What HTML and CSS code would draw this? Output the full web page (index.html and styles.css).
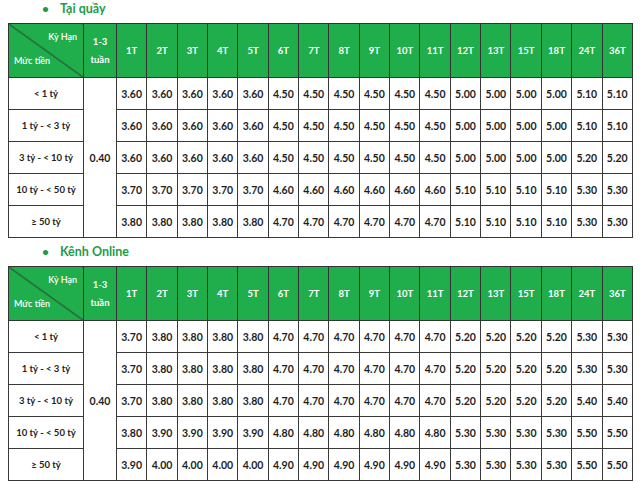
FILE: index.html
```html
<!DOCTYPE html>
<html lang="vi">
<head>
<meta charset="utf-8">
<link rel="stylesheet" href="styles.css">
</head>
<body>
<div class="page">
  <div class="title title-first"><span class="dot">•</span>Tại quầy</div>
  <table class="rates">
    <colgroup><col class="c-label"><col class="c-week"><col span="17"></colgroup>
    <thead>
      <tr>
        <th class="diag"><span class="k">Kỳ Hạn</span><span class="m">Mức tiền</span></th>
        <th>1-3<br>tuần</th>
        <th>1T</th><th>2T</th><th>3T</th><th>4T</th><th>5T</th><th>6T</th><th>7T</th><th>8T</th><th>9T</th><th>10T</th><th>11T</th><th>12T</th><th>13T</th><th>15T</th><th>18T</th><th>24T</th><th>36T</th>
      </tr>
    </thead>
    <tbody>
      <tr><td class="lbl">&lt; 1 tỷ</td><td class="wk" rowspan="5">0.40</td><td>3.60</td><td>3.60</td><td>3.60</td><td>3.60</td><td>3.60</td><td>4.50</td><td>4.50</td><td>4.50</td><td>4.50</td><td>4.50</td><td>4.50</td><td>5.00</td><td>5.00</td><td>5.00</td><td>5.00</td><td>5.10</td><td>5.10</td></tr>
      <tr><td class="lbl">1 tỷ - &lt; 3 tỷ</td><td>3.60</td><td>3.60</td><td>3.60</td><td>3.60</td><td>3.60</td><td>4.50</td><td>4.50</td><td>4.50</td><td>4.50</td><td>4.50</td><td>4.50</td><td>5.00</td><td>5.00</td><td>5.00</td><td>5.00</td><td>5.10</td><td>5.10</td></tr>
      <tr><td class="lbl">3 tỷ - &lt; 10 tỷ</td><td>3.60</td><td>3.60</td><td>3.60</td><td>3.60</td><td>3.60</td><td>4.50</td><td>4.50</td><td>4.50</td><td>4.50</td><td>4.50</td><td>4.50</td><td>5.00</td><td>5.00</td><td>5.00</td><td>5.00</td><td>5.20</td><td>5.20</td></tr>
      <tr><td class="lbl">10 tỷ - &lt; 50 tỷ</td><td>3.70</td><td>3.70</td><td>3.70</td><td>3.70</td><td>3.70</td><td>4.60</td><td>4.60</td><td>4.60</td><td>4.60</td><td>4.60</td><td>4.60</td><td>5.10</td><td>5.10</td><td>5.10</td><td>5.10</td><td>5.30</td><td>5.30</td></tr>
      <tr><td class="lbl">≥ 50 tỷ</td><td>3.80</td><td>3.80</td><td>3.80</td><td>3.80</td><td>3.80</td><td>4.70</td><td>4.70</td><td>4.70</td><td>4.70</td><td>4.70</td><td>4.70</td><td>5.10</td><td>5.10</td><td>5.10</td><td>5.10</td><td>5.30</td><td>5.30</td></tr>
    </tbody>
  </table>

  <div class="title"><span class="dot">•</span>Kênh Online</div>
  <table class="rates">
    <colgroup><col class="c-label"><col class="c-week"><col span="17"></colgroup>
    <thead>
      <tr>
        <th class="diag"><span class="k">Kỳ Hạn</span><span class="m">Mức tiền</span></th>
        <th>1-3<br>tuần</th>
        <th>1T</th><th>2T</th><th>3T</th><th>4T</th><th>5T</th><th>6T</th><th>7T</th><th>8T</th><th>9T</th><th>10T</th><th>11T</th><th>12T</th><th>13T</th><th>15T</th><th>18T</th><th>24T</th><th>36T</th>
      </tr>
    </thead>
    <tbody>
      <tr><td class="lbl">&lt; 1 tỷ</td><td class="wk" rowspan="5">0.40</td><td>3.70</td><td>3.80</td><td>3.80</td><td>3.80</td><td>3.80</td><td>4.70</td><td>4.70</td><td>4.70</td><td>4.70</td><td>4.70</td><td>4.70</td><td>5.20</td><td>5.20</td><td>5.20</td><td>5.20</td><td>5.30</td><td>5.30</td></tr>
      <tr><td class="lbl">1 tỷ - &lt; 3 tỷ</td><td>3.70</td><td>3.80</td><td>3.80</td><td>3.80</td><td>3.80</td><td>4.70</td><td>4.70</td><td>4.70</td><td>4.70</td><td>4.70</td><td>4.70</td><td>5.20</td><td>5.20</td><td>5.20</td><td>5.20</td><td>5.30</td><td>5.30</td></tr>
      <tr><td class="lbl">3 tỷ - &lt; 10 tỷ</td><td>3.70</td><td>3.80</td><td>3.80</td><td>3.80</td><td>3.80</td><td>4.70</td><td>4.70</td><td>4.70</td><td>4.70</td><td>4.70</td><td>4.70</td><td>5.20</td><td>5.20</td><td>5.20</td><td>5.20</td><td>5.40</td><td>5.40</td></tr>
      <tr><td class="lbl">10 tỷ - &lt; 50 tỷ</td><td>3.80</td><td>3.90</td><td>3.90</td><td>3.90</td><td>3.90</td><td>4.80</td><td>4.80</td><td>4.80</td><td>4.80</td><td>4.80</td><td>4.80</td><td>5.30</td><td>5.30</td><td>5.30</td><td>5.30</td><td>5.50</td><td>5.50</td></tr>
      <tr><td class="lbl">≥ 50 tỷ</td><td>3.90</td><td>4.00</td><td>4.00</td><td>4.00</td><td>4.00</td><td>4.90</td><td>4.90</td><td>4.90</td><td>4.90</td><td>4.90</td><td>4.90</td><td>5.30</td><td>5.30</td><td>5.30</td><td>5.30</td><td>5.50</td><td>5.50</td></tr>
    </tbody>
  </table>
</div>
</body>
</html>
```

FILE: styles.css
```css
html, body {
  margin: 0;
  padding: 0;
  background: #ffffff;
}

.page {
  padding-left: 8px;
  font-family: "Lato", "Inter", "Noto Sans", sans-serif;
  color: #222;
}

.title {
  height: 28px;
  line-height: 28px;
  font-size: 12.5px;
  font-weight: 700;
  color: #1d9c48;
  padding-left: 34px;
}

.title-first {
  height: 23px;
  line-height: 18px;
}

.dot {
  display: inline-block;
  width: 18px;
  font-size: 12px;
}

.rates {
  width: 625px;
  table-layout: fixed;
  border-collapse: collapse;
  border: 1.5px solid #3a3a3a;
}

.c-label { width: 75px; }
.c-week { width: 33px; }

.rates th,
.rates td {
  border: 1.5px solid #3a3a3a;
  padding: 0;
  text-align: center;
  vertical-align: middle;
  box-sizing: border-box;
}

.rates th {
  height: 54px;
  background: #1fae4b;
  color: #ffffff;
  font-size: 9.5px;
  font-weight: 700;
  line-height: 18px;
  border-color: #333333;
}

.rates td {
  height: 32px;
  font-size: 10.5px;
  font-weight: 700;
  color: #1e1e1e;
}

.rates td.lbl {
  font-size: 9.5px;
  font-weight: 700;
}

.rates td.wk {
  font-size: 10.5px;
}

.rates th.diag {
  position: relative;
  background: linear-gradient(to top right, #1fae4b calc(50% - 0.8px), #2b2b2b 50%, #1fae4b calc(50% + 0.8px));
  text-align: left;
  font-size: 9px;
  font-weight: 600;
  line-height: 12px;
}

.diag .k {
  position: absolute;
  top: 7px;
  right: 6px;
}

.diag .m {
  position: absolute;
  bottom: 10px;
  left: 5px;
}
```
